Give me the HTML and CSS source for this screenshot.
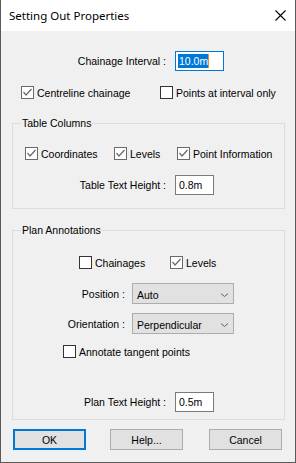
FILE: index.html
```html
<!DOCTYPE html>
<html lang="en">
<head>
    <meta charset="UTF-8">
    <title>Setting Out Properties</title>
    <link rel="stylesheet" href="styles.css">
</head>
<body>

<div class="dialog">
    <div class="titlebar">
        <span class="title">Setting Out Properties</span>
        <svg class="close" width="11" height="11" viewBox="0 0 11 11">
            <path d="M0.5 0.5 L10.5 10.5 M10.5 0.5 L0.5 10.5" stroke="#000" stroke-width="1.1" fill="none"/>
        </svg>
    </div>

    <div class="content">
        <div class="field-row outer first-field">
            <label class="field-label">Chainage Interval :</label>
            <div class="text-input focused wide"><span class="selection">10.0m</span></div>
        </div>

        <div class="check-row row-main">
            <label class="check w139"><span class="box on"><svg viewBox="0 0 11 11"><path d="M1.5 5 L4 8 L9.5 2"/></svg></span>Centreline chainage</label>
            <label class="check"><span class="box"></span>Points at interval only</label>
        </div>

        <div class="group table-group">
            <span class="legend">Table Columns</span>
            <div class="check-row row-columns">
                <label class="check w89"><span class="box on"><svg viewBox="0 0 11 11"><path d="M1.5 5 L4 8 L9.5 2"/></svg></span>Coordinates</label>
                <label class="check w63"><span class="box on"><svg viewBox="0 0 11 11"><path d="M1.5 5 L4 8 L9.5 2"/></svg></span>Levels</label>
                <label class="check"><span class="box on"><svg viewBox="0 0 11 11"><path d="M1.5 5 L4 8 L9.5 2"/></svg></span>Point Information</label>
            </div>
            <div class="field-row table-height">
                <label class="field-label">Table Text Height :</label>
                <div class="text-input">0.8m</div>
            </div>
        </div>

        <div class="group plan-group">
            <span class="legend">Plan Annotations</span>
            <div class="check-row row-plan">
                <label class="check w91"><span class="box"></span>Chainages</label>
                <label class="check"><span class="box on"><svg viewBox="0 0 11 11"><path d="M1.5 5 L4 8 L9.5 2"/></svg></span>Levels</label>
            </div>
            <div class="combo-row position-row">
                <label class="combo-label">Position :</label>
                <div class="combo">Auto<svg class="chevron" width="7" height="4" viewBox="0 0 7 4"><path d="M0 0.5 L3.5 3.5 L7 0.5" stroke="#606060" fill="none"/></svg></div>
            </div>
            <div class="combo-row orientation-row">
                <label class="combo-label">Orientation :</label>
                <div class="combo">Perpendicular<svg class="chevron" width="7" height="4" viewBox="0 0 7 4"><path d="M0 0.5 L3.5 3.5 L7 0.5" stroke="#606060" fill="none"/></svg></div>
            </div>
            <div class="check-row row-tangent">
                <label class="check"><span class="box"></span>Annotate tangent points</label>
            </div>
            <div class="field-row plan-height">
                <label class="field-label">Plan Text Height :</label>
                <div class="text-input">0.5m</div>
            </div>
        </div>

        <div class="buttons">
            <button class="default">OK</button>
            <button class="help-btn">Help...</button>
            <button class="cancel-btn">Cancel</button>
        </div>
    </div>
</div>

</body>
</html>
```

FILE: styles.css
```css
body {
    margin: 0;
    font-family: "Liberation Sans", Arial, sans-serif;
    font-size: 10.5px;
    color: #000;
    background: #fff;
}
.dialog {
    width: 296px;
    height: 463px;
    box-sizing: border-box;
    border: 1px solid #5a5a5a;
    border-top: none;
    background: #f0f0f0;
    display: flex;
    flex-direction: column;
}
.titlebar {
    height: 31px;
    flex-shrink: 0;
    background: #fff;
    display: flex;
    align-items: center;
    justify-content: space-between;
    padding: 0 9px 0 8px;
}
.title {
    font-family: "Noto Sans", "Liberation Sans", sans-serif;
    font-size: 11.5px;
    color: #000;
}
.close {
    display: block;
}
.content {
    flex: 1;
    padding: 0 10px 0 11px;
}

/* label + edit box */
.field-row {
    display: flex;
    align-items: center;
}
.field-row.outer {
    padding-left: 1px;
}
.field-label {
    width: 153px;
    text-align: right;
    margin-right: 9px;
}
.first-field {
    margin-top: 20px;
}
.text-input {
    width: 39px;
    height: 20px;
    box-sizing: border-box;
    border: 1px solid #7a7a7a;
    background: #fff;
    padding-left: 3px;
    display: flex;
    align-items: center;
}
.text-input.wide {
    width: 49px;
}
.text-input.focused {
    border-color: #0078d7;
    padding-left: 2px;
}
.selection {
    background: #0078d7;
    color: #fff;
    padding: 1px 0 1px 1px;
    border-right: 1px solid #e8903a;
}

/* checkboxes */
.check-row {
    display: flex;
    align-items: center;
    height: 13px;
}
.check {
    display: flex;
    align-items: center;
    gap: 3px;
    white-space: nowrap;
}
.box {
    width: 13px;
    height: 13px;
    box-sizing: border-box;
    border: 1px solid #333;
    background: #fff;
    flex-shrink: 0;
}
.box.on {
    border-color: #6a6a6a;
}
.box svg {
    display: block;
    width: 11px;
    height: 11px;
}
.box svg path {
    fill: none;
    stroke: #6a6a6a;
    stroke-width: 1.2;
}
.w139 { width: 139px; }
.w89 { width: 89px; }
.w63 { width: 63px; }
.w91 { width: 91px; }

.row-main {
    margin-top: 15px;
    padding-left: 9px;
}

/* group boxes */
.group {
    position: relative;
    border: 1px solid #dcdcdc;
}
.legend {
    position: absolute;
    top: -7px;
    left: 8px;
    line-height: 13px;
    padding: 0 1px;
    background: #f0f0f0;
}
.table-group {
    margin-top: 24px;
    padding-bottom: 13px;
}
.row-columns {
    margin-top: 23px;
    padding-left: 12px;
}
.table-height {
    margin-top: 15px;
}
.plan-group {
    margin-top: 21px;
    padding-bottom: 7px;
}
.row-plan {
    margin-top: 25px;
    padding-left: 66px;
}

/* combo boxes */
.combo-row {
    display: flex;
    align-items: center;
}
.combo-label {
    width: 112px;
    text-align: right;
    margin-right: 7px;
}
.combo {
    width: 102px;
    height: 21px;
    box-sizing: border-box;
    border: 1px solid #adadad;
    background: #e1e1e1;
    padding: 2px 5px 0 4px;
    display: flex;
    align-items: center;
    justify-content: space-between;
}
.position-row {
    margin-top: 14px;
}
.orientation-row {
    margin-top: 9px;
}
.row-tangent {
    margin-top: 11px;
    padding-left: 50px;
}
.plan-height {
    margin-top: 34px;
}

/* buttons */
.buttons {
    display: flex;
    margin-top: 9px;
    padding-left: 1px;
}
button {
    width: 73px;
    height: 21px;
    box-sizing: border-box;
    border: 1px solid #adadad;
    background: #e1e1e1;
    font-family: "Liberation Sans", Arial, sans-serif;
    font-size: 10.5px;
    color: #000;
    padding: 0;
}
button.default {
    border: 2px solid #0078d7;
}
.help-btn {
    margin-left: 24px;
}
.cancel-btn {
    margin-left: 26px;
}
```
